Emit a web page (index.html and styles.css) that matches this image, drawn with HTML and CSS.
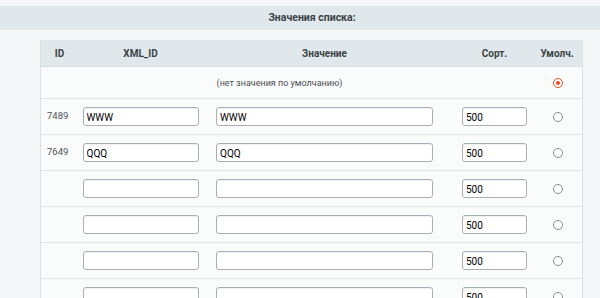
FILE: index.html
```html
<!DOCTYPE html>
<html lang="ru">
<head>
<meta charset="utf-8">
<link rel="stylesheet" href="styles.css">
</head>
<body>
<div class="page">
  <div class="title-bar">Значения списка:</div>
  <div class="list">
    <div class="row head">
      <div class="c c-id">ID</div>
      <div class="c">XML_ID</div>
      <div class="c">Значение</div>
      <div class="c">Сорт.</div>
      <div class="c c-def">Умолч.</div>
    </div>
    <div class="row none">
      <div class="c c-id"></div>
      <div class="c none-text">(нет значения по умолчанию)</div>
      <div class="c c-def"><span class="radio on"></span></div>
    </div>
    <div class="row">
      <div class="c c-id num">7489</div>
      <div class="c"><input class="in in-xml" value="WWW"></div>
      <div class="c"><input class="in in-val" value="WWW"></div>
      <div class="c"><input class="in in-sort" value="500"></div>
      <div class="c c-def"><span class="radio"></span></div>
    </div>
    <div class="row">
      <div class="c c-id num">7649</div>
      <div class="c"><input class="in in-xml" value="QQQ"></div>
      <div class="c"><input class="in in-val" value="QQQ"></div>
      <div class="c"><input class="in in-sort" value="500"></div>
      <div class="c c-def"><span class="radio"></span></div>
    </div>
    <div class="row">
      <div class="c c-id num"></div>
      <div class="c"><input class="in in-xml" value=""></div>
      <div class="c"><input class="in in-val" value=""></div>
      <div class="c"><input class="in in-sort" value="500"></div>
      <div class="c c-def"><span class="radio"></span></div>
    </div>
    <div class="row">
      <div class="c c-id num"></div>
      <div class="c"><input class="in in-xml" value=""></div>
      <div class="c"><input class="in in-val" value=""></div>
      <div class="c"><input class="in in-sort" value="500"></div>
      <div class="c c-def"><span class="radio"></span></div>
    </div>
    <div class="row">
      <div class="c c-id num"></div>
      <div class="c"><input class="in in-xml" value=""></div>
      <div class="c"><input class="in in-val" value=""></div>
      <div class="c"><input class="in in-sort" value="500"></div>
      <div class="c c-def"><span class="radio"></span></div>
    </div>
    <div class="row">
      <div class="c c-id num"></div>
      <div class="c"><input class="in in-xml" value=""></div>
      <div class="c"><input class="in in-val" value=""></div>
      <div class="c"><input class="in in-sort" value="500"></div>
      <div class="c c-def"><span class="radio"></span></div>
    </div>
  </div>
</div>
</body>
</html>
```
FILE: styles.css
```css
html, body {
  margin: 0;
  padding: 0;
  background: #f4f7f8;
  overflow: hidden;
}
body {
  font-family: Roboto, "Liberation Sans", Arial, sans-serif;
  font-size: 10px;
  color: #3c4448;
}
.page {
  width: 600px;
  height: 298px;
  padding-top: 6px;
  box-sizing: border-box;
  overflow: hidden;
}
.title-bar {
  height: 24px;
  line-height: 23px;
  background: #e1e8eb;
  text-align: center;
  font-weight: bold;
  font-size: 10.5px;
  color: #3b4347;
  padding-left: 24px;
}
.list {
  margin: 10px 0 0 40px;
  width: 543px;
  background: #fafbfb;
  border-left: 1px solid #d9e0e3;
  border-right: 1px solid #d9e0e3;
  box-sizing: border-box;
}
.row {
  display: grid;
  grid-template-columns: 35px 129px 239px 101px 38px;
  height: 36px;
  border-bottom: 1px solid #dfe4e6;
  box-sizing: border-box;
  align-items: center;
}
.row.head {
  height: 27px;
  background: #e1e8eb;
  font-weight: bold;
  font-size: 10px;
  color: #3b4347;
  border-bottom: 1px solid #d6dde0;
}
.row.head .c {
  text-align: center;
}
.row.none {
  height: 32px;
  grid-template-columns: 35px 469px 38px;
}
.none-text {
  text-align: center;
  color: #4a5154;
  font-size: 9px;
  padding-right: 62px;
}
.c {
  display: flex;
  justify-content: center;
  align-items: center;
}
.c-id {
  justify-content: flex-start;
}
.row.head .c-id {
  justify-content: center;
  padding-left: 2px;
}
.num {
  padding-left: 6px;
  align-self: start;
  padding-top: 11px;
  font-size: 9.5px;
  color: #4d5356;
}
.c-def {
  padding-right: 13px;
}
.row.head .c-def {
  padding-right: 14px;
}
.in {
  box-sizing: border-box;
  height: 19px;
  border: 1px solid #a7aeb4;
  border-radius: 3px;
  background: #fff;
  font-family: Roboto, "Liberation Sans", Arial, sans-serif;
  font-size: 10px;
  color: #000;
  padding: 2px 3px 0 3px;
  margin: 0;
  box-shadow: inset 0 1px 1px rgba(0,0,0,0.06);
  outline: none;
}
.in-xml { width: 116px; }
.in-val { width: 217px; }
.in-sort { width: 65px; }
.radio {
  display: block;
  width: 10px;
  height: 10px;
  box-sizing: border-box;
  border: 1.3px solid #868c91;
  border-radius: 50%;
  background: #fff;
  position: relative;
}
.radio.on {
  border: 1.8px solid #ea4a1e;
}
.radio.on::after {
  content: "";
  position: absolute;
  left: 50%;
  top: 50%;
  width: 4px;
  height: 4px;
  margin: -2px 0 0 -2px;
  border-radius: 50%;
  background: #ea4a1e;
}
```
